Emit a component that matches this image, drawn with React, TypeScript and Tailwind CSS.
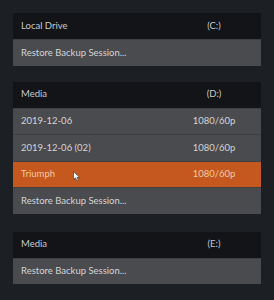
import React from "react";

type Row = { label: string; format?: string; active?: boolean; cursor?: boolean };
type Drive = { name: string; letter: string; rows: Row[] };

const DRIVES: Drive[] = [
  { name: "Local Drive", letter: "(C:)", rows: [{ label: "Restore Backup Session..." }] },
  {
    name: "Media",
    letter: "(D:)",
    rows: [
      { label: "2019-12-06", format: "1080/60p" },
      { label: "2019-12-06 (02)", format: "1080/60p" },
      { label: "Triumph", format: "1080/60p", active: true, cursor: true },
      { label: "Restore Backup Session..." },
    ],
  },
  { name: "Media", letter: "(E:)", rows: [{ label: "Restore Backup Session..." }] },
];

const Cursor = () => (
  <svg className="absolute left-[60px] top-[9px]" width="8" height="11" viewBox="0 0 8 11">
    <path d="M0.5 0.5 L0.5 8.5 L2.5 6.8 L4 10 L5.3 9.4 L3.9 6.3 L6.5 6.3 Z" fill="#ffffff" stroke="#333" strokeWidth="0.6" />
  </svg>
);

export default function App() {
  return (
    <div
      className="w-[274px] h-[300px] bg-[#1c1f24] pt-[13px] px-[13px] flex flex-col gap-[16px] text-[9.5px]"
      style={{ fontFamily: 'Lato, "Open Sans", sans-serif' }}
    >
      {DRIVES.map((d, i) => (
        <div key={i} className={`flex flex-col ${i === 2 ? "mt-[2px]" : ""}`}>
          <div className="h-[26px] bg-[#121417] flex items-center text-[#c9cacc]">
            <span className="flex-1 pl-2">{d.name}</span>
            <span className="w-[60px] text-center mr-[17px]">{d.letter}</span>
          </div>
          {d.rows.map((r, j) => (
            <div
              key={j}
              className={`relative h-[26.5px] flex items-center border-t border-[#3f4043] first:border-t-0 ${
                r.active ? "bg-[#c4581e] text-[#f0c9a8]" : "bg-[#4a4b4e] text-[#d3d4d6]"
              }`}
            >
              <span className="flex-1 pl-2">{r.label}</span>
              {r.format && <span className="w-[60px] text-center mr-[17px]">{r.format}</span>}
              {r.cursor && <Cursor />}
            </div>
          ))}
        </div>
      ))}
    </div>
  );
}
